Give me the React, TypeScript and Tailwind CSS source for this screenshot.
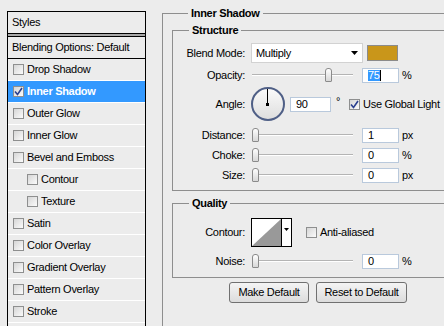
import React from 'react'

const font = { fontFamily: '"Liberation Sans", Arial, sans-serif' }

function Check({ checked = false }: { checked?: boolean }) {
  return (
    <span className="flex h-[11px] w-[11px] shrink-0 items-center justify-center border border-[#8e8f8f] bg-gradient-to-br from-[#d6d6d6] to-[#fbfbfb]">
      {checked && (
        <svg width="9" height="9" viewBox="0 0 9 9">
          <path d="M1 4.5 L3.5 7.5 L8 1" fill="none" stroke="#2a3f8f" strokeWidth="1.6" />
        </svg>
      )}
    </span>
  )
}

function Slider({ pos }: { pos: number }) {
  return (
    <div className="relative h-[16px] w-[101px]">
      <div className="absolute left-0 right-0 top-[7px] h-[2px] border-t border-[#b4b4b4] bg-white" />
      <div
        className="absolute top-[1px] h-[14px] w-[7px] rounded-t-[3px] rounded-b-[1px] border border-[#8b8b8b] bg-gradient-to-b from-white to-[#d8d8d8]"
        style={{ left: pos }}
      />
    </div>
  )
}

function NumBox({ value, selected = false, w = 37 }: { value: string; selected?: boolean; w?: number }) {
  return (
    <div
      className="flex h-[15px] items-center border border-[#b9c9dc] bg-white pl-[5px] text-[11px] leading-none"
      style={{ width: w }}
    >
      {selected ? (
        <>
          <span className="bg-[#3399ff] text-white">{value}</span>
          <span className="h-[11px] w-px bg-black" />
        </>
      ) : (
        <span>{value}</span>
      )}
    </div>
  )
}

function Label({ children }: { children: React.ReactNode }) {
  return <span className="w-[72px] shrink-0 text-right">{children}</span>
}

// group box title sitting on the top border line
function Legend({ children }: { children: React.ReactNode }) {
  return <div className="-mt-[7px] ml-[16px] w-fit bg-[#ececec] px-[3px] font-bold leading-[13px]">{children}</div>
}

const styles = [
  { name: 'Drop Shadow' },
  { name: 'Inner Shadow', on: true },
  { name: 'Outer Glow' },
  { name: 'Inner Glow' },
  { name: 'Bevel and Emboss' },
  { name: 'Contour', sub: true },
  { name: 'Texture', sub: true },
  { name: 'Satin' },
  { name: 'Color Overlay' },
  { name: 'Gradient Overlay' },
  { name: 'Pattern Overlay' },
  { name: 'Stroke' },
]

export default function App() {
  return (
    <div className="flex h-[326px] w-[444px] overflow-hidden bg-[#ececec] text-[11px] tracking-[-0.3px] text-black" style={font}>
      {/* styles list */}
      <div className="ml-[7px] mt-[11px] h-[330px] w-[139px] shrink-0 border-x border-t border-black">
        <div className="flex h-[22px] items-center border-b border-black pl-[4px]">Styles</div>
        <div className="h-[2px] bg-[#a8a8a8]" />
        <div className="flex h-[23px] items-center border-y border-black pl-[4px]">Blending Options: Default</div>
        {styles.map((s) => (
          <div
            key={s.name}
            className={`flex h-[22px] items-center gap-[3px] border-b border-white ${s.sub ? 'pl-[19px]' : 'pl-[5px]'} ${s.on ? 'bg-[#3399ff] font-bold text-white' : ''}`}
          >
            <Check checked={s.on} />
            <span>{s.name}</span>
          </div>
        ))}
      </div>

      {/* settings */}
      <div className="ml-[16px] flex-1">
        <div className="mt-[13px] h-[330px] border-l border-t border-[#8e8e8e] pl-[9px]">
          <Legend>Inner Shadow</Legend>

          <div className="mt-[10px] border-y border-l border-[#8e8e8e] pb-[7px]">
            <Legend>Structure</Legend>
            <div className="mt-[6px] flex h-[20px] items-center">
              <Label>Blend Mode:</Label>
              <div className="ml-[6px] flex h-[20px] w-[112px] items-center justify-between border border-[#d2d2d2] bg-white pl-[4px] pr-[4px]">
                <span>Multiply</span>
                <svg width="7" height="4" viewBox="0 0 7 4"><path d="M0 0 H7 L3.5 4 Z" fill="#000" /></svg>
              </div>
              <div className="ml-[4px] h-[16px] w-[31px] border border-[#8b8b8b] bg-[#c9961a]" />
            </div>
            <div className="mt-[4px] flex h-[16px] items-center">
              <Label>Opacity:</Label>
              <div className="ml-[7px]"><Slider pos={73} /></div>
              <div className="ml-[9px]"><NumBox value="75" selected /></div>
              <span className="ml-[3px]">%</span>
            </div>
            <div className="mt-[4px] flex h-[34px] items-center">
              <Label>Angle:</Label>
              <div className="relative ml-[6px] h-[34px] w-[34px] rounded-full border-2 border-[#4f5f86] bg-gradient-to-b from-[#fafafa] to-[#dedede]">
                <div className="absolute left-[14px] top-0 h-[15px] w-px bg-black" />
                <div className="absolute left-[13px] top-[14px] h-[3px] w-[3px] bg-black" />
              </div>
              <div className="ml-[5px]"><NumBox value="90" w={41} /></div>
              <span className="ml-[5px] self-start pt-[9px] leading-none">°</span>
              <div className="ml-[9px] flex items-center gap-[3px]">
                <Check checked />
                <span className="whitespace-nowrap">Use Global Light</span>
              </div>
            </div>
            {[
              ['Distance:', '1', 'px'],
              ['Choke:', '0', '%'],
              ['Size:', '0', 'px'],
            ].map(([l, v, u], i) => (
              <div key={l} className={`${i === 0 ? 'mt-[6px]' : 'mt-[4px]'} flex h-[16px] items-center`}>
                <Label>{l}</Label>
                <div className="ml-[7px]"><Slider pos={0} /></div>
                <div className="ml-[9px]"><NumBox value={v} /></div>
                <span className="ml-[3px]">{u}</span>
              </div>
            ))}
          </div>

          <div className="mt-[12px] border-y border-l border-[#8e8e8e] pb-[8px]">
            <Legend>Quality</Legend>
            <div className="mt-[8px] flex h-[29px] items-center">
              <Label>Contour:</Label>
              <div className="ml-[6px] flex h-[29px] w-[41px] border border-black bg-white">
                <svg width="29" height="27" viewBox="0 0 29 27" className="block">
                  <path d="M0 27 L29 0 L29 27 Z" fill="#999" />
                </svg>
                <div className="flex flex-1 justify-center border-l border-black pt-[9px]">
                  <svg width="5" height="3" viewBox="0 0 5 3"><path d="M0 0 H5 L2.5 3 Z" fill="#000" /></svg>
                </div>
              </div>
              <div className="ml-[14px] flex items-center gap-[3px]">
                <Check />
                <span>Anti-aliased</span>
              </div>
            </div>
            <div className="mt-[6px] flex h-[16px] items-center">
              <Label>Noise:</Label>
              <div className="ml-[7px]"><Slider pos={0} /></div>
              <div className="ml-[9px]"><NumBox value="0" /></div>
              <span className="ml-[3px]">%</span>
            </div>
          </div>

          <div className="ml-[57px] mt-[4px] flex gap-[7px]">
            <button className="h-[21px] w-[80px] rounded-[3px] border border-[#707070] bg-gradient-to-b from-[#f4f4f4] to-[#dcdcdc]">Make Default</button>
            <button className="h-[21px] w-[91px] rounded-[3px] border border-[#707070] bg-gradient-to-b from-[#f4f4f4] to-[#dcdcdc]">Reset to Default</button>
          </div>
        </div>
      </div>
    </div>
  )
}
